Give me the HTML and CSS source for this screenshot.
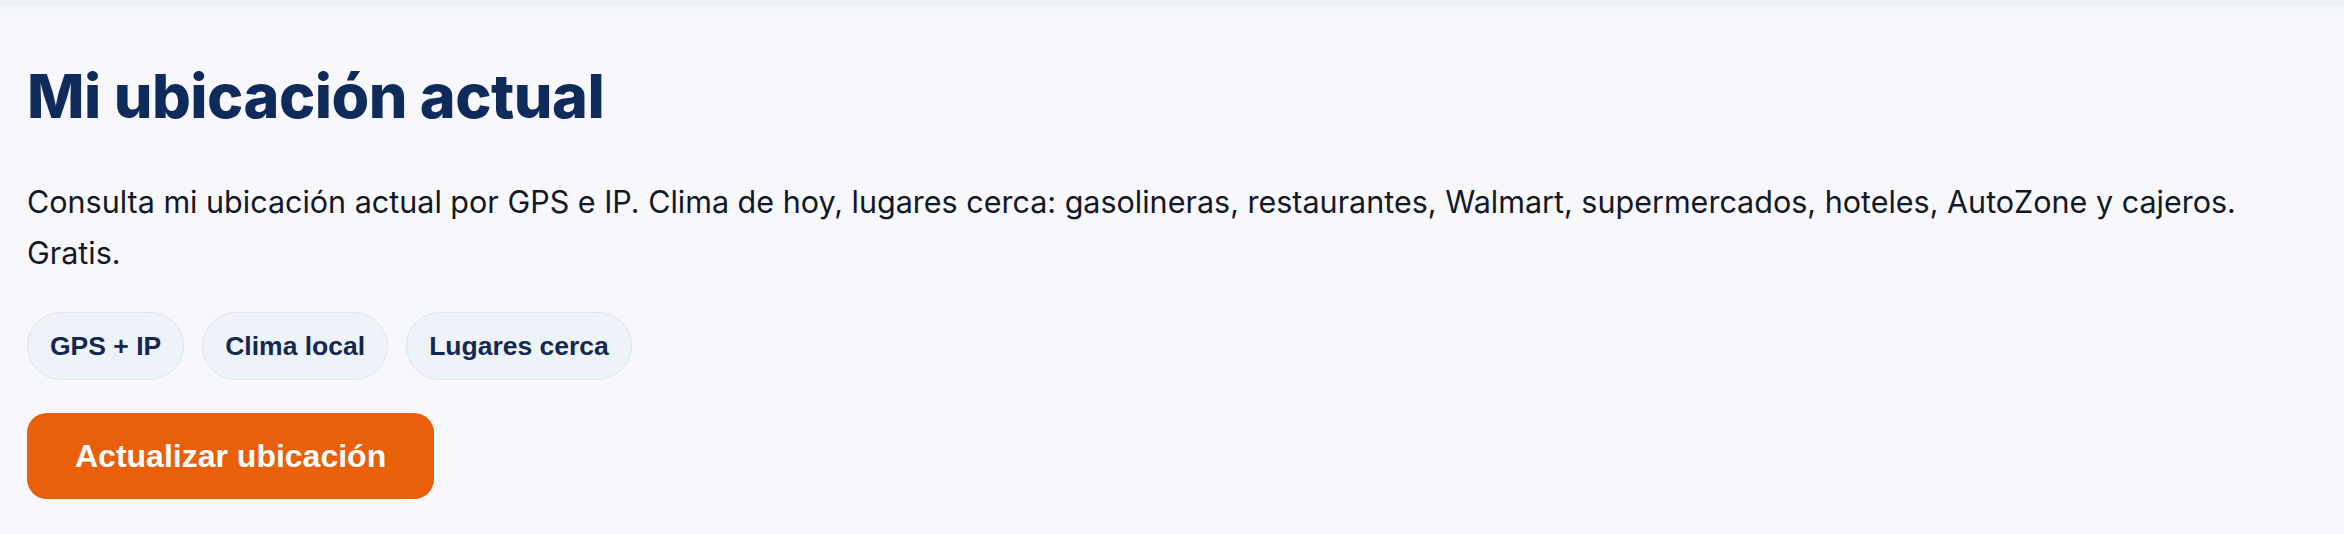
FILE: index.html
```html
<!DOCTYPE html>
<html lang="es">
<head>
    <meta charset="UTF-8">
    <meta name="viewport" content="width=device-width, initial-scale=1.0">
    <title>Mi ubicación actual</title>
    <link rel="stylesheet" href="styles.css">
</head>
<body>
    <div class="top-strip"></div>
    <main class="hero">
        <h1>Mi ubicación actual</h1>
        <p class="lead">Consulta mi ubicación actual por GPS e IP. Clima de hoy, lugares cerca: gasolineras, restaurantes, Walmart, supermercados, hoteles, AutoZone y cajeros. Gratis.</p>
        <div class="chips">
            <span class="chip">GPS + IP</span>
            <span class="chip">Clima local</span>
            <span class="chip">Lugares cerca</span>
        </div>
        <button type="button" class="refresh-btn" id="refreshBtn">Actualizar ubicación</button>
    </main>
</body>
</html>
```

FILE: styles.css
```css
body {
    margin: 0;
    padding: 0;
    background-color: #f8f8fc;
    font-family: Inter, 'Noto Sans', sans-serif;
    color: #111827;
}
.top-strip {
    height: 13px;
    background: linear-gradient(to bottom, #eef2f5 0, #eef2f5 5px, #f3f8fb 6px, #f5f8fc 13px);
}
.hero {
    padding: 46px 27px 40px;
}
h1 {
    margin: 0;
    font-size: 61px;
    line-height: 74px;
    font-weight: 800;
    letter-spacing: -0.5px;
    color: #0f2b5b;
}
.lead {
    margin: 43px 0 0;
    font-size: 30.5px;
    line-height: 51px;
    color: #121826;
}
.chips {
    display: flex;
    gap: 18px;
    margin-top: 34px;
}
.chip {
    display: inline-block;
    padding: 18px 22px;
    font-family: 'Liberation Sans', Arial, sans-serif;
    font-size: 26.5px;
    line-height: 30px;
    font-weight: 700;
    color: #13294f;
    background-color: #eef2f9;
    border: 1px solid #dde4ee;
    border-radius: 40px;
}
.refresh-btn {
    display: block;
    margin-top: 33px;
    padding: 25px 48px;
    font-family: 'Liberation Sans', Arial, sans-serif;
    font-size: 32px;
    line-height: 36px;
    font-weight: 700;
    color: #fff;
    background-color: #ea5f0a;
    border: none;
    border-radius: 20px;
    cursor: pointer;
}
.refresh-btn:hover {
    background-color: #d85406;
}
```
